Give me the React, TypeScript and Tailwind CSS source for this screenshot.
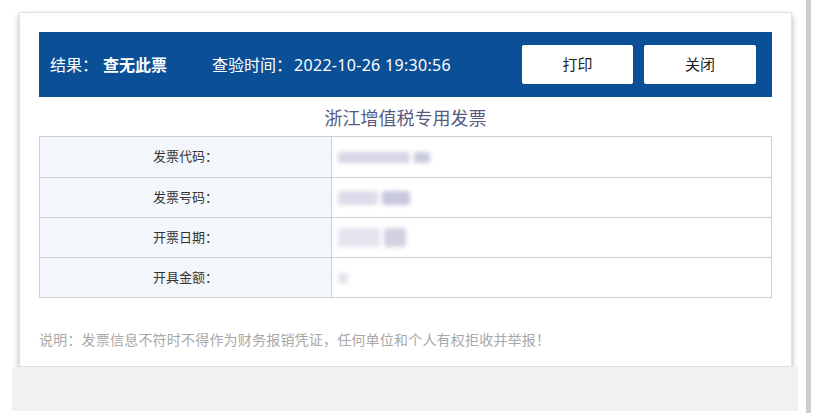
import React from 'react';

const rows = [
  { label: '发票代码：', blur: [{ w: 72, h: 11, c: 'bg-[#d6d6e6]' }, { w: 16, h: 11, c: 'bg-[#c9c9df]' }] },
  { label: '发票号码：', blur: [{ w: 40, h: 14, c: 'bg-[#dcdcea]' }, { w: 28, h: 14, c: 'bg-[#c8c8de]' }] },
  { label: '开票日期：', blur: [{ w: 42, h: 19, c: 'bg-[#e4e4ee]' }, { w: 22, h: 19, c: 'bg-[#d2d2e2]' }] },
  { label: '开具金额：', blur: [{ w: 10, h: 10, c: 'bg-[#e2e2ea]' }] },
];

export default function App() {
  return (
    <div
      className="w-[816px] h-[413px] bg-white overflow-hidden flex"
      style={{ fontFamily: '"Noto Sans", "Noto Sans CJK SC", sans-serif' }}
    >
      <div className="w-[806px] flex flex-col pt-[12px]">
        {/* card */}
        <div className="ml-[19px] w-[773px] h-[355px] bg-white border border-[#e2e2e2] shadow-[0_3px_6px_rgba(0,0,0,0.3)] px-[19px] pt-[19px] flex flex-col">
          <div className="h-[65px] bg-[#0b4f96] flex items-center pl-[11px] pr-[16px] text-white text-[16px]">
            <span>结果：</span>
            <span className="ml-[5px] font-bold">查无此票</span>
            <span className="ml-[45px]">查验时间：</span>
            <span className="ml-[2px] tracking-[0.3px]">2022-10-26 19:30:56</span>
            <div className="ml-auto flex gap-[11px]">
              <button className="w-[111px] h-[39px] bg-white rounded-[2px] text-[#222] text-[15px]">打印</button>
              <button className="w-[112px] h-[39px] bg-white rounded-[2px] text-[#222] text-[15px]">关闭</button>
            </div>
          </div>
          <div className="h-[39px] flex items-center justify-center pt-[3px] text-[18px] text-[#575a82]">
            浙江增值税专用发票
          </div>
          <div className="border border-[#cfcfcf]">
            {rows.map((r, i) => (
              <div key={r.label} className={`flex h-[40px] ${i > 0 ? 'border-t border-[#cfcfcf]' : ''}`}>
                <div className="w-[292px] bg-[#f3f7fc] border-r border-[#cfcfcf] flex items-center justify-center text-[13px] text-[#333]">
                  {r.label}
                </div>
                <div className="flex-1 flex items-center pl-[6px] gap-[4px]">
                  {r.blur.map((b, j) => (
                    <div
                      key={j}
                      className={`${b.c} blur-[2px] rounded-[2px]`}
                      style={{ width: b.w, height: b.h }}
                    />
                  ))}
                </div>
              </div>
            ))}
          </div>
          <div className="mt-[31px] text-[14px] tracking-[0.2px] text-[#a8a8a8]">
            说明：发票信息不符时不得作为财务报销凭证，任何单位和个人有权拒收并举报！
          </div>
        </div>
        <div className="ml-[12px] w-[786px] flex-1 mb-[2px] bg-[#f1f1f1]" />
      </div>
      <div className="w-[5px] h-full bg-[#cdcdcd]" />
    </div>
  );
}
